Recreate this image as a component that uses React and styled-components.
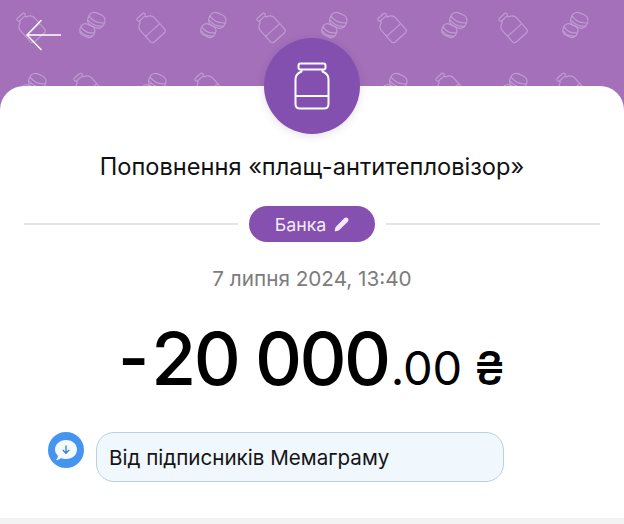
import React from "react";
import styled, { createGlobalStyle } from "styled-components";
import { Pencil } from "lucide-react";

const Global = createGlobalStyle`
	html, body {
		margin: 0;
		padding: 0;
		background: #fff;
	}
	body {
		font-family: Inter, "Liberation Sans", sans-serif;
		-webkit-font-smoothing: antialiased;
	}
`;

const Page = styled.div`
	position: relative;
	width: 624px;
	height: 524px;
	overflow: hidden;
	background: #a370b9;
`;

const Header = styled.header`
	position: relative;
	height: 86px;
	overflow: hidden;
`;

const Pattern = styled.svg`
	position: absolute;
	inset: 0;
	width: 624px;
	height: 86px;
`;

const BackButton = styled.button`
	position: absolute;
	left: 26px;
	top: 19px;
	width: 36px;
	height: 32px;
	padding: 0;
	border: 0;
	background: none;
	svg {
		display: block;
	}
`;

const Badge = styled.div`
	position: absolute;
	left: 264px;
	top: 38px;
	width: 96px;
	height: 96px;
	border-radius: 50%;
	background: #8450b0;
	box-shadow: 0 2px 8px rgba(60, 30, 90, 0.14);
	display: flex;
	align-items: center;
	justify-content: center;
	z-index: 2;
`;

const Card = styled.main`
	height: 438px;
	box-sizing: border-box;
	padding-top: 66px;
	background: #fff;
	border-radius: 24px 24px 0 0;
	display: flex;
	flex-direction: column;
	align-items: center;
`;

const Title = styled.h1`
	margin: 0;
	font-size: 23.6px;
	font-weight: 400;
	line-height: 30px;
	color: #111;
	white-space: nowrap;
`;

const DividerRow = styled.div`
	width: 576px;
	margin-top: 24px;
	display: flex;
	align-items: center;
	gap: 11px;
`;

const Line = styled.div`
	flex: 1;
	height: 2px;
	background: #e4e4e4;
`;

const Tag = styled.div`
	width: 126px;
	height: 36px;
	border-radius: 18px;
	background: #8550b0;
	color: #f3ecf8;
	font-size: 17.8px;
	display: flex;
	align-items: center;
	justify-content: center;
	gap: 8px;
`;

const DateText = styled.div`
	margin-top: 24px;
	font-size: 20.7px;
	line-height: 26px;
	color: #7c7c7c;
	white-space: nowrap;
`;

const Amount = styled.div`
	margin-top: 18px;
	display: flex;
	align-items: baseline;
	color: #000;
	line-height: 90px;
	white-space: nowrap;
`;

const Sign = styled.span`
	font-family: "Liberation Sans", sans-serif;
	font-size: 88px;
	margin-right: 3px;
`;

const Whole = styled.span`
	font-size: 73px;
	font-weight: 500;
	letter-spacing: -2.6px;
`;

const Cents = styled.span`
	font-size: 47px;
	font-weight: 400;
	margin-left: 2px;
`;

const Currency = styled.span`
	font-size: 46px;
	font-weight: 500;
	margin-left: 12px;
`;

const CommentRow = styled.div`
	align-self: flex-start;
	margin-top: 19px;
	margin-left: 48px;
	display: flex;
	align-items: flex-start;
	gap: 12px;
`;

const CommentIcon = styled.div`
	width: 36px;
	height: 36px;
	border-radius: 50%;
	background: #4594f2;
	display: flex;
	align-items: center;
	justify-content: center;
	flex: none;
`;

const Bubble = styled.div`
	width: 408px;
	height: 50px;
	box-sizing: border-box;
	padding-left: 12px;
	border: 1px solid #b9d2e0;
	border-radius: 18px;
	background: #f0f7fd;
	color: #151515;
	font-size: 20.6px;
	display: flex;
	align-items: center;
	white-space: nowrap;
`;

const BottomStrip = styled.div`
	position: absolute;
	left: 0;
	right: 0;
	bottom: 0;
	height: 6px;
	background: #f3f3f4;
`;

const Jar = ({ x, y }) => (
	<g transform={`translate(${x} ${y}) rotate(-42)`}>
		<rect x="-5" y="-15" width="10" height="3.500" rx="1.500" />
		<path d="M-4 -11.500 L-4 -10 Q-9.500 -8 -9.500 -4 L-9.500 11 Q-9.500 14 -6.500 14 L6.500 14 Q9.500 14 9.500 11 L9.500 -4 Q9.500 -8 4 -10 L4 -11.500" />
		<path d="M-9.500 4 L9.500 4" />
	</g>
);

const Stack = ({ cx, cy, w, h }) => (
	<g>
		<rect x={cx - w / 2} y={cy - h / 2} width={w} height={h} rx={h / 2.4} />
		<path d={`M${cx - w / 2} ${cy - 1} Q${cx} ${cy + 4} ${cx + w / 2} ${cy - 1}`} />
		<path d={`M${cx - w / 2 + 1} ${cy + 3} Q${cx} ${cy + 7} ${cx + w / 2 - 1} ${cy + 3}`} />
	</g>
);

const Coins = ({ x, y }) => (
	<g transform={`translate(${x} ${y}) rotate(24)`}>
		<Stack cx={2} cy={-6} w={17} h={14} />
		<Stack cx={-2} cy={7} w={15} h={12} />
	</g>
);

const topJars = [30, 150, 270, 391, 512];
const topCoins = [92, 213, 334, 454, 575];
const lowCoins = [33, 153, 394, 514];
const lowJars = [87, 208, 449, 570];

const App = () => {
	return (
		<Page>
			<Global />
			<Header>
				<Pattern viewBox="0 0 624 86" fill="none" stroke="#c09bd3" strokeWidth="1.200">
					{topJars.map((x) => (
						<Jar key={x} x={x} y={27} />
					))}
					{topCoins.map((x) => (
						<Coins key={x} x={x} y={25} />
					))}
					{lowCoins.map((x) => (
						<Coins key={x} x={x} y={86} />
					))}
					{lowJars.map((x) => (
						<Jar key={x} x={x} y={87} />
					))}
				</Pattern>
				<BackButton aria-label="Назад">
					<svg width="36" height="32" viewBox="0 0 36 32" fill="none" stroke="#fff" strokeWidth="1.400">
						<path d="M35 16 L1 16 M15.500 1 L1 16 L15.500 31" />
					</svg>
				</BackButton>
			</Header>
			<Badge>
				<svg width="36" height="48" viewBox="0 0 36 48" fill="none" stroke="#fff" strokeWidth="2" strokeLinejoin="round">
					<rect x="4.500" y="1.500" width="27" height="6" rx="2" />
					<path d="M7.500 7.500 L7.500 9.500 Q1.500 12 1.500 17 L1.500 42 Q1.500 46.500 6 46.500 L30 46.500 Q34.500 46.500 34.500 42 L34.500 17 Q34.500 12 28.500 9.500 L28.500 7.500" />
					<path d="M1.500 34 L34.500 34" />
				</svg>
			</Badge>
			<Card>
				<Title>Поповнення «плащ-антитепловізор»</Title>
				<DividerRow>
					<Line />
					<Tag>
						Банка
						<Pencil size={15} color="#f3ecf8" fill="#f3ecf8" strokeWidth={2} />
					</Tag>
					<Line />
				</DividerRow>
				<DateText>7 липня 2024, 13:40</DateText>
				<Amount>
					<Sign>-</Sign>
					<Whole>20 000</Whole>
					<Cents>.00</Cents>
					<Currency>₴</Currency>
				</Amount>
				<CommentRow>
					<CommentIcon>
						<svg width="26" height="26" viewBox="0 0 26 26">
							<path d="M13 3 C20 3 24 7.500 24 12.500 C24 18 19.500 22 13 22 C11 22 9.500 21.700 8 21 C6.500 22.500 5 23 3 23 C4.500 21.500 5 20 4.800 18.500 C3 16.800 2 14.800 2 12.500 C2 7.500 6.500 3 13 3 Z" fill="#f4f9fe" />
							<path d="M13 8.500 L13 16 M9.800 13 L13 16.200 L16.200 13" fill="none" stroke="#3f86c8" strokeWidth="1.400" />
						</svg>
					</CommentIcon>
					<Bubble>Від підписників Мемаграму</Bubble>
				</CommentRow>
			</Card>
			<BottomStrip />
		</Page>
	);
};

export default App;
